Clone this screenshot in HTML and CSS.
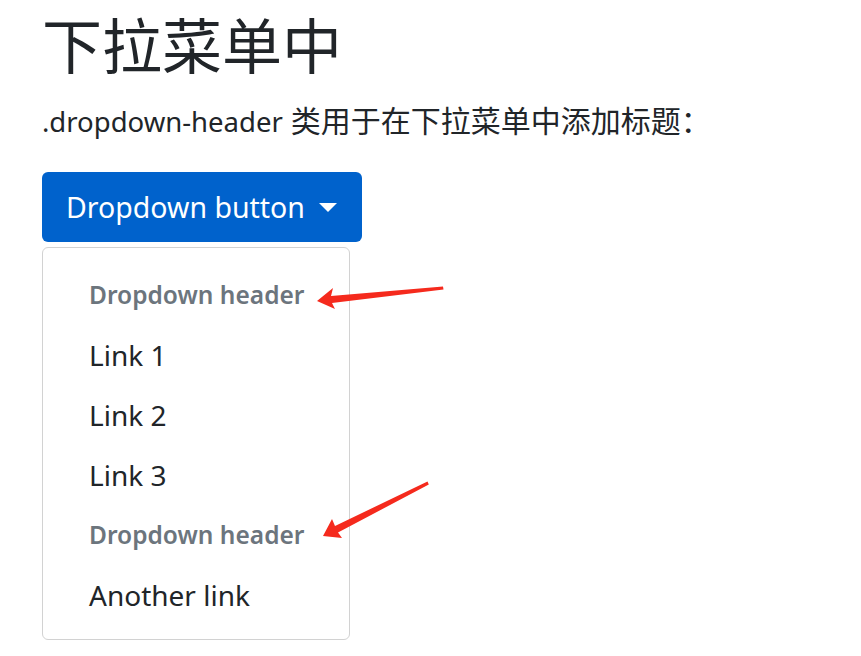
FILE: index.html
```html
<!DOCTYPE html>
<html lang="zh-CN">
<head>
    <meta charset="UTF-8">
    <meta name="viewport" content="width=device-width, initial-scale=1.0">
    <title>下拉菜单中</title>
    <link rel="stylesheet" href="styles.css">
</head>
<body>

<div class="container">
    <h1>下拉菜单中</h1>
    <p class="lead"><span class="cls">.dropdown-header</span> 类用于在下拉菜单中添加标题：</p>

    <div class="dropdown">
        <button class="btn-dropdown" type="button">Dropdown button <span class="caret"></span></button>
        <div class="dropdown-menu">
            <h5 class="dropdown-header">Dropdown header</h5>
            <a class="dropdown-item" href="#">Link 1</a>
            <a class="dropdown-item" href="#">Link 2</a>
            <a class="dropdown-item" href="#">Link 3</a>
            <h5 class="dropdown-header">Dropdown header</h5>
            <a class="dropdown-item" href="#">Another link</a>
        </div>
    </div>
</div>

<!-- flechas de anotación sobre la captura -->
<svg class="notes" width="861" height="656" viewBox="0 0 861 656">
    <polygon points="317,301 333,288 331,296 443,286.5 443.5,289.5 332,303 335,309" fill="#f52a1d"/>
    <polygon points="323,536 332,519 335,526 427.5,481.5 428.8,484.5 338,532.5 342,538" fill="#f52a1d"/>
</svg>

</body>
</html>
```

FILE: styles.css
```css
body {
    margin: 0;
    font-family: "Noto Sans", "Noto Sans CJK SC", sans-serif;
    color: #212529;
    background-color: #fff;
}
.container {
    padding: 10px 42px;
}
h1 {
    font-size: 60px;
    font-weight: 400;
    line-height: 1.2;
    margin: 0 0 16px;
}
.lead {
    font-size: 30px;
    line-height: 1.5;
    margin: 0 0 29px;
}
.lead .cls {
    font-size: 27.5px;
}
.btn-dropdown {
    display: inline-flex;
    align-items: center;
    height: 70px;
    padding: 0 25px 0 24px;
    font-family: inherit;
    font-size: 28.5px;
    color: #fff;
    background-color: #0062cc;
    border: none;
    border-radius: 6px;
    cursor: pointer;
}
.caret {
    display: inline-block;
    margin-left: 14px;
    border-top: 9px solid #fff;
    border-left: 9px solid transparent;
    border-right: 9px solid transparent;
}
.dropdown-menu {
    width: 306px;
    margin-top: 5px;
    padding: 17px 0 14px;
    border: 1px solid #d2d2d2;
    border-radius: 6px;
}
.dropdown-header,
.dropdown-item {
    display: block;
    height: 60px;
    line-height: 60px;
    padding: 0 0 0 46px;
    margin: 0;
}
.dropdown-header {
    font-size: 24.5px;
    font-weight: 600;
    color: #6c757d;
}
.dropdown-item {
    font-size: 28px;
    color: #212529;
    text-decoration: none;
}
.notes {
    position: absolute;
    top: 0;
    left: 0;
    pointer-events: none;
}
```
